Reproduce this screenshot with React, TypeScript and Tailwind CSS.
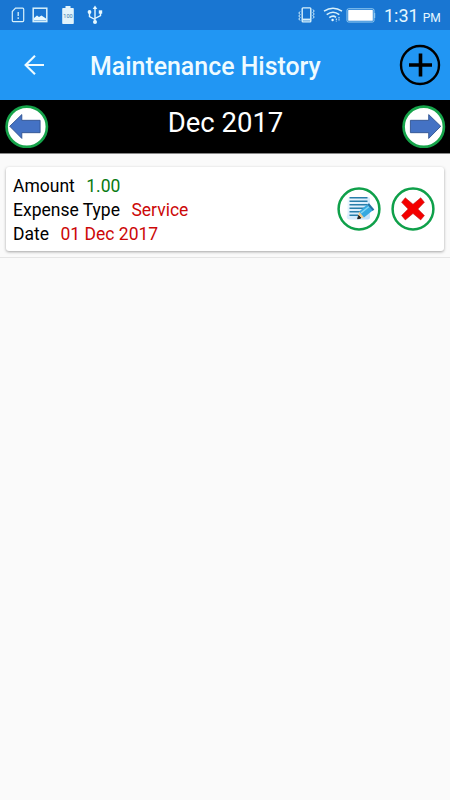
import React from 'react';

function SimIcon() {
  return (
    <svg className="h-4 w-[14px]" viewBox="0 0 14 16" fill="none" stroke="#d8f1fb">
      <path d="M4.5 1.2h7.2q1 0 1 1v11.4q0 1-1 1H2.3q-1 0-1-1V4.6z" strokeWidth="1.2" />
      <path d="M7.2 5v4M7.2 10.3v1.6" strokeWidth="1.3" />
    </svg>
  );
}

function PictureIcon() {
  return (
    <svg className="h-4 w-4" viewBox="0 0 16 16">
      <rect x="1.2" y="1.2" width="13.6" height="13.4" fill="none" stroke="#d8f1fb" strokeWidth="1.5" />
      <path d="M2 13.5V11l3-2.5 2 1.5 2.5-1.5L14 11.5v2z" fill="#e6f8ff" />
    </svg>
  );
}

function BatteryFullIcon() {
  return (
    <svg className="h-[18px] w-3" viewBox="0 0 12 18">
      <path d="M3.5 0h5v2H11q.8 0 .8.8v14.4q0 .8-.8.8H1q-.8 0-.8-.8V2.8Q.2 2 1 2h2.5z" fill="#e2f3fb" />
      <text x="6" y="12" textAnchor="middle" fontSize="5.5" fontFamily="Roboto, sans-serif" fill="#3b79a9">100</text>
    </svg>
  );
}

function UsbIcon() {
  return (
    <svg className="h-5 w-4" viewBox="0 0 16 20" fill="none" stroke="#e6f8ff" strokeWidth="1.4">
      <path d="M8 3v14M8 14.5L2.5 11.5V7M8 13.5l5.5-3V7" />
      <path d="M8 .5l2.3 3.5H5.7z" fill="#e6f8ff" stroke="none" />
      <circle cx="8" cy="17" r="2" fill="#e6f8ff" stroke="none" />
      <circle cx="2.5" cy="7" r="1.9" fill="#e6f8ff" stroke="none" />
      <rect x="11.8" y="5.3" width="3.4" height="3.4" fill="#e6f8ff" stroke="none" />
    </svg>
  );
}

function VibrateIcon() {
  return (
    <svg className="h-4 w-[17px]" viewBox="0 0 17 16" fill="none" stroke="#d8f1fb">
      <rect x="4.2" y=".9" width="8.6" height="14" rx=".8" strokeWidth="1.4" />
      <path d="M4.5 12.6h8" strokeWidth="2" />
      <path d="M2 4.5L.8 6 2 7.5.8 9 2 10.5.8 12 2 13.5M15 2.5L16.2 4 15 5.5 16.2 7 15 8.5 16.2 10 15 11.5" strokeWidth="1" />
    </svg>
  );
}

function WifiIcon() {
  return (
    <svg className="h-4 w-5" viewBox="0 0 20 16" fill="none" stroke="#d8f1fb" strokeWidth="1.5">
      <path d="M1 4.2Q10-1.5 19 4.2M3.7 7.7Q10 3 16.3 7.7M6.3 10.7Q10 7.8 13 10.3" />
      <circle cx="9.6" cy="13" r="1.2" fill="#e6f8ff" stroke="none" />
      <path d="M13.3 11.5v3M16 10v3.5" strokeWidth="1" strokeDasharray="1.5 .7" />
    </svg>
  );
}

function BatteryIcon() {
  return (
    <svg className="h-[15px] w-[30px]" viewBox="0 0 30 15">
      <rect x="1" y=".8" width="27" height="13.2" rx="1.5" fill="none" stroke="#9bd0f2" strokeWidth="1" />
      <rect x="2.2" y="2" width="24.6" height="10.8" rx=".5" fill="#fff" />
      <path d="M28.7 5v5" stroke="#9bd0f2" />
    </svg>
  );
}

function MonthArrow({ flip = false }: { flip?: boolean }) {
  return (
    <svg className="size-[43.5px]" viewBox="0 0 44 44">
      <circle cx="22" cy="22" r="20.4" fill="#fff" stroke="#16a34a" strokeWidth="2.7" />
      <g transform={flip ? 'translate(44 0) scale(-1 1)' : undefined}>
        <path d="M4.8 21.5L17 9.7v5.8h18.5v12.5H17v5.8z" fill="#4472c4" stroke="#2f528f" strokeWidth=".9" />
      </g>
    </svg>
  );
}

function EditIcon() {
  return (
    <svg className="size-11" viewBox="0 0 44 44">
      <defs>
        <linearGradient id="paper" x1="0" y1="0" x2="1" y2="1">
          <stop offset="0" stopColor="#f4fbff" />
          <stop offset="1" stopColor="#bfe0fa" />
        </linearGradient>
      </defs>
      <circle cx="22" cy="22" r="20.4" fill="#fff" stroke="#0fa04a" strokeWidth="2.5" />
      <path d="M13 10h18q2 0 2 2v18q0 2.5-2.5 2.5h-18Q10 32.5 9.5 30q1-2 1-5V12q0-2 2.5-2z" fill="url(#paper)" />
      <path d="M12.5 10.7H30.5M12.5 14.2H30.5M12.5 17.7H30.5M12.5 21.2H28M12.5 24.7H24M12.5 28.2H21" stroke="#287eaa" strokeWidth="1.4" />
      <path d="M20.5 32l1.7-7.5 4.8 6z" fill="#f3c98a" />
      <path d="M20.7 31.8l.9-3.3 2.3 2.5z" fill="#222" stroke="#222" />
      <path d="M22.2 24.5l8-7 5.5 6-8.7 7z" fill="#35a9e0" />
      <path d="M24 26l8-6.5" stroke="#83d6f5" strokeWidth="1.5" />
      <path d="M30.2 17.5l1.8-1.3 5.3 6.3-1.6 1.4z" fill="#2273a3" />
    </svg>
  );
}

function DeleteIcon() {
  return (
    <svg className="size-11" viewBox="0 0 44 44">
      <circle cx="22" cy="22" r="20.4" fill="#fff" stroke="#0fa04a" strokeWidth="2.5" />
      <path d="M14.3 10.8l7.7 6.5 7.7-6.5 3.7 4.5-6.5 6.7 6.5 6.6-3.7 4.3-7.7-6.4-7.7 6.4-3.7-4.3 6.5-6.6-6.5-6.7z" fill="#f40000" stroke="#bd2020" strokeWidth=".6" />
    </svg>
  );
}

function Field({ label, value, tone }: { label: string; value: string; tone: string }) {
  return (
    <div className="flex h-6 items-center gap-[11.5px] whitespace-nowrap text-[17.5px] leading-none">
      <span className="text-black">{label}</span>
      <span className={tone}>{value}</span>
    </div>
  );
}

export default function App() {
  return (
    <div className="flex h-[800px] w-[450px] flex-col overflow-hidden bg-[#fafafa] font-['Roboto',sans-serif]">
      <div className="flex h-[30px] shrink-0 items-center bg-[#1976d2] pl-[11px]">
        <SimIcon />
        <div className="ml-[7px]"><PictureIcon /></div>
        <div className="ml-[14px]"><BatteryFullIcon /></div>
        <div className="ml-[13px]"><UsbIcon /></div>
        <div className="ml-[195px]"><VibrateIcon /></div>
        <div className="ml-2"><WifiIcon /></div>
        <div className="ml-[3px]"><BatteryIcon /></div>
        <div className="ml-[8px] flex items-baseline gap-1 whitespace-nowrap pt-[2px] leading-none text-[#e6f8ff]">
          <span className="text-[18px]">1:31</span>
          <span className="text-[12px]">PM</span>
        </div>
      </div>

      <header className="flex h-[70px] shrink-0 items-center bg-[#2196f3] pl-6">
        <svg className="h-5 w-5" viewBox="0 0 20 20" fill="none" stroke="#effbff" strokeWidth="2.1">
          <path d="M20 10H2M11 .8L1.6 10l9.4 9.2" />
        </svg>
        <h1 className="ml-[46px] w-[309px] whitespace-nowrap pt-1 text-[24.9px] font-medium leading-none text-[#effbff]">Maintenance History</h1>
        <svg className="size-[42px]" viewBox="0 0 42 42" fill="none" stroke="#000">
          <circle cx="21" cy="21" r="19" strokeWidth="2.4" />
          <path d="M21.5 9.5v23M10 21h23" strokeWidth="3.6" />
        </svg>
      </header>

      <div className="flex h-[54px] shrink-0 items-center justify-between border-b border-[#888] bg-black pl-[5px] pr-1">
        <MonthArrow />
        <span className="whitespace-nowrap pb-[7px] text-[27.5px] leading-none text-white">Dec 2017</span>
        <MonthArrow flip />
      </div>

      <main className="h-[104px] shrink-0 border-b border-[#e5e5e5] pt-[13px]">
        <section className="mx-[6px] flex h-[84px] items-center rounded-[3px] bg-white pl-[7px] shadow-[0_1px_3px_rgba(0,0,0,0.35)]">
          <div className="w-[324px] pt-1">
            <Field label="Amount" value="1.00" tone="text-[#087a12]" />
            <Field label="Expense Type" value="Service" tone="text-[#cc0808]" />
            <Field label="Date" value="01 Dec 2017" tone="text-[#cc0808]" />
          </div>
          <div className="flex gap-[10px]">
            <EditIcon />
            <DeleteIcon />
          </div>
        </section>
      </main>
    </div>
  );
}
